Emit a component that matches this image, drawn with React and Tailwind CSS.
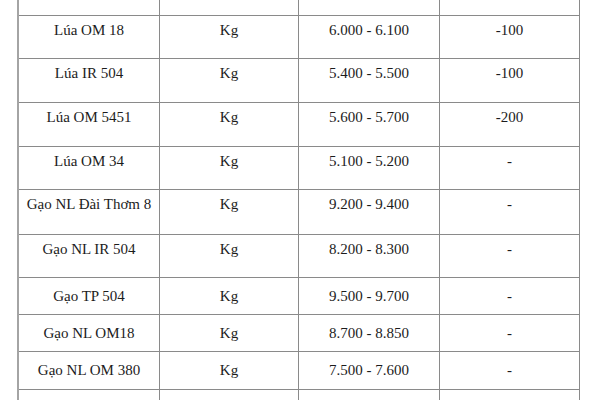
import React from "react";

const rows = [
  { name: "Lúa OM 18", price: "6.000 - 6.100", change: "-100", cls: "h-[42px] pt-[6px]" },
  { name: "Lúa IR 504", price: "5.400 - 5.500", change: "-100", cls: "h-[43px] pt-[6px]" },
  { name: "Lúa OM 5451", price: "5.600 - 5.700", change: "-200", cls: "h-[43px] pt-[6px]" },
  { name: "Lúa OM 34", price: "5.100 - 5.200", change: "-", cls: "h-[42px] pt-[6px]" },
  { name: "Gạo NL Đài Thơm 8", price: "9.200 - 9.400", change: "-", cls: "h-[44px] pt-[6px]" },
  { name: "Gạo NL IR 504", price: "8.200 - 8.300", change: "-", cls: "h-[42px] pt-[6px]" },
  { name: "Gạo TP 504", price: "9.500 - 9.700", change: "-", cls: "h-[36px] pt-[10px]" },
  { name: "Gạo NL OM18", price: "8.700 - 8.850", change: "-", cls: "h-[36px] pt-[10px]" },
  { name: "Gạo NL OM 380", price: "7.500 - 7.600", change: "-", cls: "h-[37px] pt-[10px]" },
  { name: "Gạo NL OM 5451", price: "8.650 - 8.750", change: "-", cls: "h-[40px] pt-[8px]" },
];

function Row({ cells, cls }) {
  return (
    <div className="grid grid-cols-[141px_139px_141px_140px] border-b border-[#8a8a8a]">
      {cells.map((c, i) => (
        <div
          key={i}
          className={`${cls} border-r border-[#8a8a8a] text-center leading-[17px]`}
        >
          {c}
        </div>
      ))}
    </div>
  );
}

export default function App() {
  return (
    <div className="w-[600px] h-[400px] overflow-hidden bg-white text-[15px] text-[#1c1c1c] [font-family:'Liberation_Serif',serif]">
      <div className="ml-[17px] w-[563px] border-l-2 border-[#a4a4a4]">
        <div className="grid grid-cols-[141px_139px_141px_140px] border-b border-[#8a8a8a]">
          <div className="h-[15px] border-r border-[#8a8a8a]" />
          <div className="h-[15px] border-r border-[#8a8a8a]" />
          <div className="h-[15px] border-r border-[#8a8a8a]" />
          <div className="h-[15px] border-r border-[#8a8a8a]" />
        </div>
        {rows.map((r, i) => (
          <Row key={i} cls={r.cls} cells={[r.name, "Kg", r.price, r.change]} />
        ))}
      </div>
    </div>
  );
}
